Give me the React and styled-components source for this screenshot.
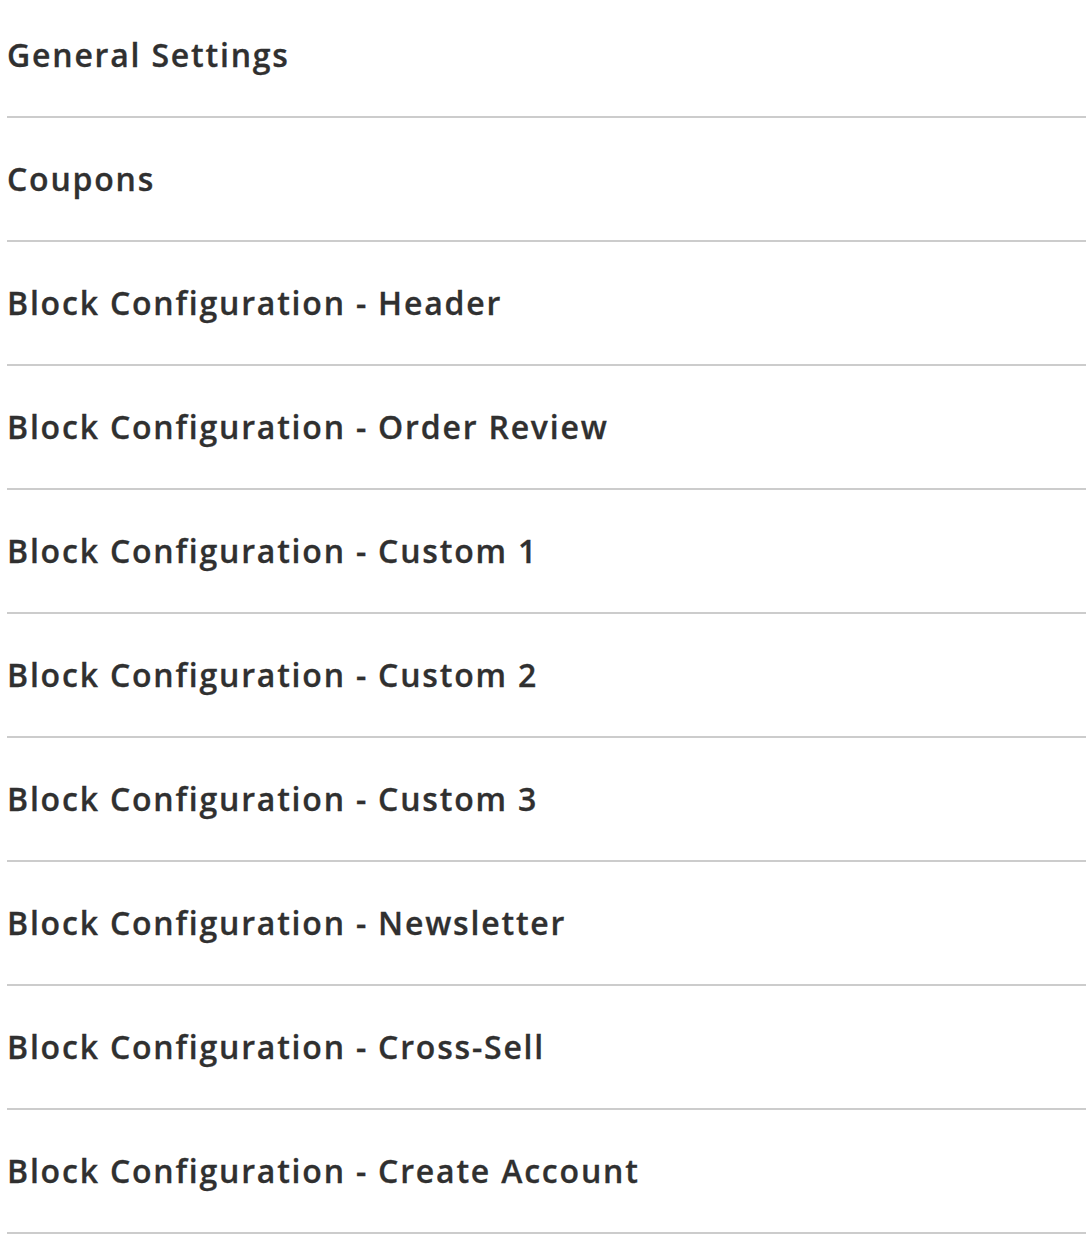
import React from "react";
import styled, { createGlobalStyle } from "styled-components";

const GlobalStyle = createGlobalStyle`
  html, body { margin: 0; padding: 0; background: #ffffff; }
  body { font-family: "Open Sans", "Liberation Sans", sans-serif; }
`;

const List = styled.div`
  display: flex;
  flex-direction: column;
  padding-left: 7px;
`;

const Section = styled.div`
  padding: 39px 0 39px 0;
  border-bottom: 2px solid #cccccc;
  &:first-child { padding-top: 33px; }
`;

const Title = styled.h3`
  margin: 0;
  font-family: "Open Sans", "Liberation Sans", sans-serif;
  font-weight: 600;
  font-size: 32px;
  line-height: 44px;
  letter-spacing: 1.8px;
  color: #303030;
  -webkit-text-stroke: 0.3px #303030;
`;

const sections = [
  "General Settings",
  "Coupons",
  "Block Configuration - Header",
  "Block Configuration - Order Review",
  "Block Configuration - Custom 1",
  "Block Configuration - Custom 2",
  "Block Configuration - Custom 3",
  "Block Configuration - Newsletter",
  "Block Configuration - Cross-Sell",
  "Block Configuration - Create Account",
];

export default function App() {
  return (
    <>
      <GlobalStyle />
      <List>
        {sections.map((s) => (
          <Section key={s}>
            <Title>{s}</Title>
          </Section>
        ))}
      </List>
    </>
  );
}
